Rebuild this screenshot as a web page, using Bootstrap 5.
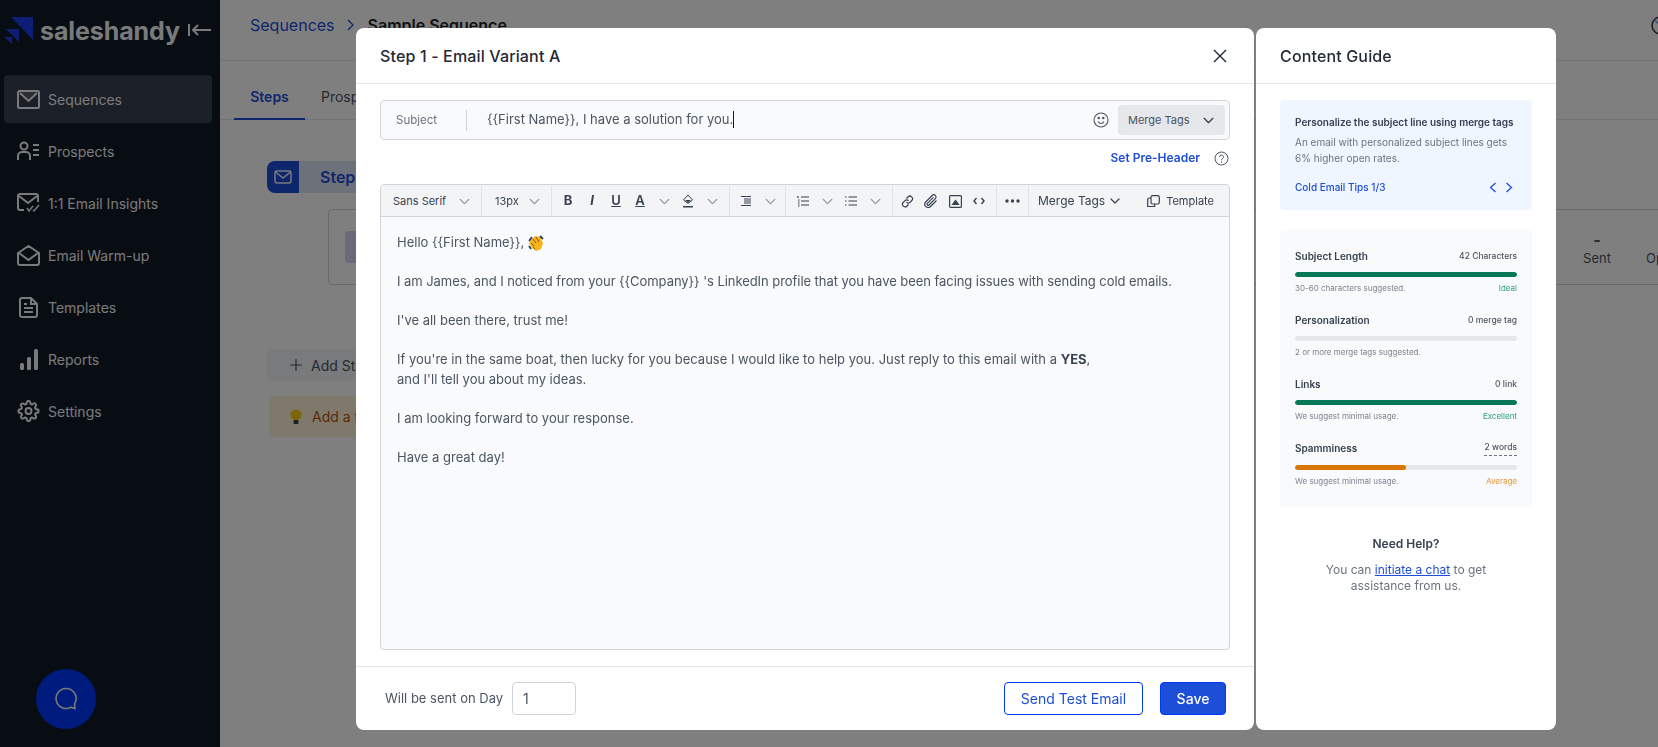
<!DOCTYPE html>
<html lang="en">
<head>
    <meta charset="UTF-8">
    <meta name="viewport" content="width=device-width, initial-scale=1.0">
    <title>Sample Sequence</title>
    <link href="https://cdn.jsdelivr.net/npm/bootstrap@5.3.0/dist/css/bootstrap.min.css" rel="stylesheet">
    <style>
        body { font-family: Inter, "Liberation Sans", sans-serif; font-size: 13px; color: #4b5563; overflow: hidden; height: 747px; background: #fff; }
        svg { flex: none; display: block; }

        /* sidebar */
        .side-bar { width: 220px; flex: none; height: 747px; background: #111827; color: #f3f4f6; padding: 0 8px 0 4px; position: relative; }
        .logo-row { height: 60px; margin-bottom: 15px; }
        .logo-text { font-size: 25px; font-weight: 700; line-height: 1; color: #f3f4f6; margin-top: 2px; letter-spacing: -.1px; }
        .side-link { height: 48px; margin-bottom: 4px; padding-left: 13px; gap: 8px; font-size: 14px; border-radius: 4px; color: #f3f4f6; }
        .side-link.is-active { background: #373e4e; }
        .chat-bubble { position: absolute; left: 36px; top: 669px; width: 60px; height: 60px; border-radius: 50%; background: #0137fc; }

        /* page behind the dialog */
        .page-main { min-width: 0; }
        .top-strip { height: 61px; border-bottom: 1px solid #e5e7eb; padding: 0 0 10px 30px; font-size: 16px; }
        .top-chev { margin: 0 12px 0 9px; }
        .top-help { margin: 0 -12px 0 auto; }
        .crumb { color: #1d4ed8; }
        .tab-strip { height: 59px; border-bottom: 1px solid #e5e7eb; padding-left: 14px; font-size: 14px; }
        .tab-item { height: 59px; padding: 0 16px; line-height: 71px; color: #4b5563; }
        .tab-item.is-active { color: #1d4ed8; font-weight: 600; border-bottom: 2px solid #1d4ed8; width: 71px; }
        .step-area { padding: 41px 0 0 47px; position: relative; }
        .step-head { width: 320px; height: 32px; background: #dbe3f5; border-radius: 8px 0 0 8px; font-size: 16px; font-weight: 600; color: #1d4ed8; }
        .step-ico { width: 32px; height: 32px; background: #1d4ed8; border-radius: 8px 0 0 8px; margin-right: 21px; }
        .step-card { margin: 16px 0 0 61px; width: 1400px; height: 76px; border: 1px solid #d1d5db; border-radius: 4px; padding: 21px 16px; }
        .step-purple { width: 60px; height: 32px; background: #d6d1f5; border-radius: 4px; }
        .stat-cell { width: 50px; text-align: center; font-size: 13px; color: #4b5563; line-height: 18px; margin-right: 24px; }
        .stat-open { width: 65px; margin-right: 0; text-align: left; }
        .stat-dash { font-weight: 700; font-size: 16px; }
        .add-step { width: 200px; height: 32px; margin-top: 64px; background: #f3f4f6; border-radius: 4px; padding-left: 23px; gap: 9px; font-size: 14px; color: #4b5563; }
        .add-tip { width: 200px; height: 41px; margin: 15px 0 0 2px; background: #fdf3d7; border-radius: 4px; padding-left: 21px; gap: 10px; font-size: 14px; color: #b45309; }

        /* dialog layer */
        .dim-layer { position: fixed; inset: 0; background: rgba(0, 0, 0, .5); padding: 28px 102px 17px 356px; gap: 2px; }
        .dlg-main { width: 898px; }
        .dlg-guide { width: 300px; }
        .dlg-main, .dlg-guide { background: #fff; border-radius: 8px; }
        .dlg-head { height: 56px; flex: none; border-bottom: 1px solid #e5e7eb; padding: 0 27px 0 24px; font-size: 16px; font-weight: 500; letter-spacing: .15px; color: #1f2937; }
        .dlg-body { padding: 16px 24px; flex: 1; min-height: 0; }
        .dlg-foot { height: 64px; flex: none; border-top: 1px solid #e5e7eb; padding: 0 28px 0 29px; }

        .subject-box { height: 40px; border: 1px solid #d1d5db; border-radius: 4px; background: #f9fafb; padding: 0 4px 0 15px; }
        .subject-label { font-size: 11.5px; color: #6b7280; width: 71px; border-right: 1px solid #d1d5db; height: 21px; line-height: 21px; }
        .subject-text { margin-left: 20px; }
        .caret-bar { display: inline-block; width: 1px; height: 17px; background: #111827; vertical-align: -4px; }
        .merge-btn { width: 107px; height: 30px; background: #e5e7eb; border-radius: 4px; font-size: 11px; padding: 0 10px; margin-left: 9px; color: #4b5563; }
        .pre-row { height: 44px; padding: 0 1px 8px 0; gap: 14px; font-size: 12px; }
        .pre-link { color: #1d4ed8; font-weight: 600; }

        .editor-box { border: 1px solid #d1d5db; border-radius: 4px; background: #f9fafb; height: 466px; }
        .tool-row { height: 32px; background: #f3f4f6; border-bottom: 1px solid #d1d5db; padding-top: 1px; border-radius: 4px 4px 0 0; font-size: 12px; color: #374151; }
        .tool-group { height: 30px; border-right: 1px solid #e0e2e6; padding: 0 5px; }
        .tool-cell { width: 24px; height: 30px; color: #374151; font-size: 13px; }
        .tool-cell.is-soft { color: #9ca3af; }
        .font-cell { padding-left: 12px; width: 101px; font-size: 11px; }
        .size-cell { padding-left: 13px; width: 70px; font-size: 11px; }
        .align-group { padding: 0 3px 0 4px; }
        .insert-group { padding-left: 2px; }
        .dots-group { width: 32px; padding: 0; }
        .merge-plain { padding-left: 9px; }
        .template-cell { font-size: 11px; padding-right: 15px; gap: 6px; }
        .editor-text { padding: 16px; line-height: 19.5px; color: #4b5563; }
        .editor-text p { margin: 0 0 19.5px; }
        .editor-text b { color: #374151; }
        .editor-text .tight-line { letter-spacing: -.055px; }

        .day-input { width: 64px; height: 33px; border: 1px solid #d1d5db; border-radius: 4px; margin-left: 9px; padding: 0 10px; font-size: 14px; color: #4b5563; }
        .day-label { font-size: 13px; color: #4b5563; }
        .test-btn { width: 139px; height: 33px; font-size: 14px; padding: 0; color: #1d4ed8; border: 1px solid #0137fc; background: #fff; border-radius: 4px; }
        .save-btn { width: 66px; height: 33px; font-size: 14px; padding: 0; font-weight: 500; color: #fff; background: #1d4ed8; border: 1px solid #0137fc; border-radius: 4px; margin-left: 17px; }

        /* content guide */
        .guide-body { padding: 16px 24px; }
        .tip-box { height: 110px; background: #eff6ff; border-radius: 4px; padding: 15px; font-size: 10px; }
        .tip-title { font-weight: 600; color: #374151; line-height: 14px; white-space: nowrap; }
        .tip-copy { color: #6b7280; line-height: 16px; margin-top: 5px; }
        .tip-foot { color: #1d4ed8; font-weight: 500; margin-top: 14px; height: 14px; padding-right: 4px; }
        .score-box { margin-top: 20px; height: 277px; background: #f9fafb; border-radius: 4px; padding: 19px 15px; }
        .score-item { height: 64.2px; }
        .score-top { height: 14px; font-size: 10px; font-weight: 600; color: #374151; }
        .score-count { font-size: 8.5px; font-weight: 500; color: #4b5563; }
        .dash-under { border-bottom: 1px dashed #6b7280; padding-bottom: 2px; }
        .score-track { height: 5px; background: #e5e7eb; border-radius: 3px; margin-top: 9px; overflow: hidden; }
        .score-fill { height: 5px; border-radius: 3px; }
        .fill-good { background: #047857; }
        .fill-warn { background: #d97706; }
        .score-note { margin-top: 6px; font-size: 8px; line-height: 11px; color: #7b8390; }
        .note-good { color: #2f9e78; }
        .note-warn { color: #e8963a; }
        .help-block { margin-top: 29px; text-align: center; font-size: 12px; line-height: 16px; color: #6b7280; padding: 0 24px; }
        .help-title { font-weight: 600; color: #374151; margin-bottom: 10px; }
        .help-block a { color: #1d4ed8; }
    </style>
</head>
<body>
    <svg width="0" height="0" class="position-absolute">
        <symbol id="i-chev" viewBox="0 0 12 12"><path d="M2 4l4 4 4-4" fill="none" stroke="currentColor" stroke-width="1.2" stroke-linecap="round" stroke-linejoin="round"/></symbol>
    </svg>

    <div class="d-flex">
        <!-- sidebar -->
        <aside class="side-bar">
            <div class="logo-row d-flex align-items-center">
                <svg width="36" height="27" viewBox="0 0 36 27" fill="#1a3ce8"><path d="M7 0h22v23z"/><path d="M2 12h13v13z"/><path d="M0 20h8v7z"/></svg>
                <span class="logo-text">saleshandy</span>
                <svg class="ms-2" width="24" height="14" viewBox="0 0 24 14" fill="none" stroke="#f3f4f6" stroke-width="2"><path d="M1 1v12M23 7H5M10 2L5 7l5 5"/></svg>
            </div>
            <a class="side-link is-active d-flex align-items-center text-decoration-none" href="#">
                <svg width="23" height="19" viewBox="0 0 23 19"><rect x="1" y="1" width="21" height="17" rx="1.5" fill="none" stroke="#f3f4f6" stroke-width="2"/><path d="M1 2h21l-10.5 9z" fill="#f3f4f6" fill-opacity=".15"/><path d="M3 3l8.5 8L20 3" fill="none" stroke="#f3f4f6" stroke-width="2"/></svg>
                Sequences
            </a>
            <a class="side-link d-flex align-items-center text-decoration-none" href="#">
                <svg width="23" height="20" viewBox="0 0 23 20" fill="none" stroke="#f3f4f6" stroke-width="2"><circle cx="7" cy="5" r="3.5"/><path d="M1 19v-4a4 4 0 0 1 4-4h4a4 4 0 0 1 4 4v4"/><path d="M16 4h6M16 9h6M16 14h6"/></svg>
                Prospects
            </a>
            <a class="side-link d-flex align-items-center text-decoration-none" href="#">
                <svg width="23" height="20" viewBox="0 0 23 20" fill="none" stroke="#f3f4f6" stroke-width="2"><path d="M7 17H3a2 2 0 0 1-2-2V3a2 2 0 0 1 2-2h16a2 2 0 0 1 2 2v6"/><path d="M2 3l9 7 9-7"/><path d="M10 15l2 3 4-5M16 17l1 1 5-6" stroke-width="1.5"/></svg>
                1:1 Email Insights
            </a>
            <a class="side-link d-flex align-items-center text-decoration-none" href="#">
                <svg width="23" height="22" viewBox="0 0 23 22" fill="none" stroke="#f3f4f6" stroke-width="2"><path d="M1 9l10.5-7L22 9v10a2 2 0 0 1-2 2H3a2 2 0 0 1-2-2z"/><path d="M2 9l9.5 7L21 9"/></svg>
                Email Warm-up
            </a>
            <a class="side-link d-flex align-items-center text-decoration-none" href="#">
                <svg width="23" height="21" viewBox="0 0 23 21" fill="none" stroke="#f3f4f6" stroke-width="2"><path d="M14 1H5a2 2 0 0 0-2 2v15a2 2 0 0 0 2 2h13a2 2 0 0 0 2-2V7z"/><path d="M14 1v6h6M7 11h9M7 15h9M7 7h3"/></svg>
                Templates
            </a>
            <a class="side-link d-flex align-items-center text-decoration-none" href="#">
                <svg width="23" height="21" viewBox="0 0 23 21" fill="#f3f4f6"><rect x="3" y="14" width="4" height="7" rx="1.5"/><rect x="10" y="8" width="4" height="13" rx="1.5"/><rect x="17" y="0" width="4" height="21" rx="1.5"/></svg>
                Reports
            </a>
            <a class="side-link d-flex align-items-center text-decoration-none" href="#">
                <svg width="23" height="22" viewBox="0 0 24 24" fill="none" stroke="#f3f4f6" stroke-width="2.2"><circle cx="12" cy="12" r="3.2"/><path d="M19.4 15a1.65 1.65 0 0 0 .33 1.82l.06.06a2 2 0 0 1 0 2.83 2 2 0 0 1-2.83 0l-.06-.06a1.65 1.65 0 0 0-1.82-.33 1.65 1.65 0 0 0-1 1.51V21a2 2 0 0 1-2 2 2 2 0 0 1-2-2v-.09A1.65 1.65 0 0 0 9 19.4a1.65 1.65 0 0 0-1.82.33l-.06.06a2 2 0 0 1-2.83 0 2 2 0 0 1 0-2.83l.06-.06a1.65 1.65 0 0 0 .33-1.82 1.65 1.65 0 0 0-1.51-1H3a2 2 0 0 1-2-2 2 2 0 0 1 2-2h.09A1.65 1.65 0 0 0 4.6 9a1.65 1.65 0 0 0-.33-1.82l-.06-.06a2 2 0 0 1 0-2.83 2 2 0 0 1 2.83 0l.06.06a1.65 1.65 0 0 0 1.82.33H9a1.65 1.65 0 0 0 1-1.51V3a2 2 0 0 1 2-2 2 2 0 0 1 2 2v.09a1.65 1.65 0 0 0 1 1.51 1.65 1.65 0 0 0 1.82-.33l.06-.06a2 2 0 0 1 2.83 0 2 2 0 0 1 0 2.83l-.06.06a1.65 1.65 0 0 0-.33 1.82V9a1.65 1.65 0 0 0 1.51 1H21a2 2 0 0 1 2 2 2 2 0 0 1-2 2h-.09a1.65 1.65 0 0 0-1.51 1z"/></svg>
                Settings
            </a>
            <div class="chat-bubble d-flex align-items-center justify-content-center">
                <svg width="24" height="24" viewBox="0 0 24 24" fill="none" stroke="#f3f4f6" stroke-width="1.6"><path d="M12 1.5a10 10 0 1 0 5 18.7l4 1.3-.5-4.5A10 10 0 0 0 12 1.5z"/></svg>
            </div>
        </aside>

        <!-- page behind the dialog -->
        <main class="page-main flex-grow-1">
            <div class="top-strip d-flex align-items-center">
                <span class="crumb">Sequences</span>
                <svg class="top-chev" width="12" height="12" viewBox="0 0 12 12" fill="none" stroke="#1d4ed8" stroke-width="1.3"><path d="M4 1l5 5-5 5"/></svg>
                <span class="fw-semibold text-dark">Sample Sequence</span>
                <svg class="top-help" width="19" height="19" viewBox="0 0 19 19" fill="none" stroke="#374151" stroke-width="1.6"><circle cx="9.5" cy="9.5" r="8.5"/><path d="M3.5 4l12 11" stroke="#60a5fa"/></svg>
            </div>
            <div class="tab-strip d-flex">
                <div class="tab-item is-active px-0 text-center">Steps</div>
                <div class="tab-item">Prospects</div>
            </div>
            <div class="step-area">
                <div class="step-head d-flex align-items-center"><span class="step-ico d-flex align-items-center justify-content-center"><svg width="18" height="14" viewBox="0 0 18 14" fill="none" stroke="#f3f4f6" stroke-width="1.5"><rect x="1" y="1" width="16" height="12" rx="2"/><path d="M1.5 2L9 8l7.5-6"/></svg></span>Step 1</div>
                <div class="step-card d-flex justify-content-between">
                    <div class="step-purple"></div>
                    <div class="d-flex">
                        <div class="stat-cell"><div class="stat-dash">-</div>Sent</div>
                        <div class="stat-cell stat-open">&nbsp;<br>Opened</div>
                    </div>
                </div>
                <div class="add-step d-flex align-items-center"><svg width="12" height="12" viewBox="0 0 12 12" stroke="#4b5563" stroke-width="1.2"><path d="M6 0v12M0 6h12"/></svg> Add Step</div>
                <div class="add-tip d-flex align-items-center"><svg width="12" height="16" viewBox="0 0 12 16"><circle cx="6" cy="6" r="5.5" fill="#facc15"/><rect x="3.5" y="11" width="5" height="4" rx="1" fill="#374151"/></svg> Add a tip</div>
            </div>
        </main>
    </div>

    <!-- dialog layer -->
    <div class="dim-layer d-flex">
        <section class="dlg-main d-flex flex-column">
            <div class="dlg-head d-flex align-items-center justify-content-between">
                <span>Step 1 - Email Variant A</span>
                <svg width="14" height="14" viewBox="0 0 14 14" fill="none" stroke="#1f2937" stroke-width="1.4"><path d="M1 1l12 12M13 1L1 13"/></svg>
            </div>
            <div class="dlg-body">
                <div class="subject-box d-flex align-items-center">
                    <span class="subject-label">Subject</span>
                    <span class="subject-text flex-grow-1">{{First Name}}, I have a solution for you.<span class="caret-bar"></span></span>
                    <svg width="16" height="16" viewBox="0 0 16 16" fill="none" stroke="#4b5563" stroke-width="1.1"><circle cx="8" cy="8" r="7"/><path d="M5 9.5c.8 1.3 1.8 2 3 2s2.2-.7 3-2"/><circle cx="5.7" cy="6" r=".7" fill="#4b5563"/><circle cx="10.3" cy="6" r=".7" fill="#4b5563"/></svg>
                    <div class="merge-btn d-flex align-items-center justify-content-between">Merge Tags <svg width="13" height="13" color="#374151"><use href="#i-chev"/></svg></div>
                </div>
                <div class="pre-row d-flex align-items-center justify-content-end">
                    <a class="pre-link text-decoration-none" href="#">Set Pre-Header</a>
                    <svg width="15" height="15" viewBox="0 0 15 15" fill="none" stroke="#4b5563" stroke-width="1"><circle cx="7.5" cy="7.5" r="6.5"/><path d="M5.5 6a2 2 0 1 1 3 1.7c-.7.4-1 .8-1 1.5"/><circle cx="7.5" cy="11" r=".4"/></svg>
                </div>
                <div class="editor-box d-flex flex-column">
                    <div class="tool-row d-flex align-items-center">
                        <div class="tool-group font-cell d-flex align-items-center justify-content-between">Sans Serif <span class="tool-cell is-soft d-flex align-items-center justify-content-center"><svg width="13" height="13"><use href="#i-chev"/></svg></span></div>
                        <div class="tool-group size-cell d-flex align-items-center justify-content-between">13px <span class="tool-cell is-soft d-flex align-items-center justify-content-center"><svg width="13" height="13"><use href="#i-chev"/></svg></span></div>
                        <div class="tool-group d-flex align-items-center ps-1">
                            <span class="tool-cell d-flex align-items-center justify-content-center fw-bold">B</span>
                            <span class="tool-cell d-flex align-items-center justify-content-center fw-bold fst-italic">I</span>
                            <span class="tool-cell d-flex align-items-center justify-content-center fw-semibold text-decoration-underline">U</span>
                            <span class="tool-cell d-flex align-items-center justify-content-center fw-semibold text-decoration-underline">A</span>
                            <span class="tool-cell is-soft d-flex align-items-center justify-content-center"><svg width="13" height="13"><use href="#i-chev"/></svg></span>
                            <span class="tool-cell d-flex align-items-center justify-content-center"><svg width="12" height="14" viewBox="0 0 12 14"><path d="M6 1L1.5 6 6 9.5 10.5 6z" fill="none" stroke="#374151"/><path d="M3 6h6L6 9z" fill="#374151"/><rect x="1" y="12" width="10" height="1.5" fill="#374151"/></svg></span>
                            <span class="tool-cell is-soft d-flex align-items-center justify-content-center"><svg width="13" height="13"><use href="#i-chev"/></svg></span>
                        </div>
                        <div class="tool-group align-group d-flex align-items-center">
                            <span class="tool-cell d-flex align-items-center justify-content-center"><svg width="12" height="12" viewBox="0 0 12 12" stroke="#374151" stroke-width="1.2"><path d="M1 1.5h10M4 4h7M4 6h7M4 8h7M1 10.5h10"/></svg></span>
                            <span class="tool-cell is-soft d-flex align-items-center justify-content-center"><svg width="13" height="13"><use href="#i-chev"/></svg></span>
                        </div>
                        <div class="tool-group d-flex align-items-center">
                            <span class="tool-cell d-flex align-items-center justify-content-center"><svg width="12" height="12" viewBox="0 0 12 12" stroke="#374151" stroke-width="1.2"><path d="M4 2h8M4 6h8M4 10h8M1 1v2M1 5h1.5M1 7h1.5M1 9h1.5M1 11h1.5"/></svg></span>
                            <span class="tool-cell is-soft d-flex align-items-center justify-content-center"><svg width="13" height="13"><use href="#i-chev"/></svg></span>
                            <span class="tool-cell d-flex align-items-center justify-content-center"><svg width="12" height="12" viewBox="0 0 12 12" stroke="#374151" stroke-width="1.2"><path d="M3.5 2H12M3.5 6H12M3.5 10H12M0 2h1.5M0 6h1.5M0 10h1.5"/></svg></span>
                            <span class="tool-cell is-soft d-flex align-items-center justify-content-center"><svg width="13" height="13"><use href="#i-chev"/></svg></span>
                        </div>
                        <div class="tool-group insert-group d-flex align-items-center">
                            <span class="tool-cell d-flex align-items-center justify-content-center"><svg width="13" height="13" viewBox="0 0 13 13" fill="none" stroke="#374151" stroke-width="1.2"><path d="M5.5 3.5L7 2a2.5 2.5 0 0 1 3.8 3.5L9 7.3a2.5 2.5 0 0 1-3.5 0"/><path d="M7.5 9.5L6 11a2.5 2.5 0 0 1-3.8-3.5L4 5.7a2.5 2.5 0 0 1 3.5 0"/></svg></span>
                            <span class="tool-cell d-flex align-items-center justify-content-center"><svg width="14" height="14" viewBox="0 0 14 14" fill="none" stroke="#374151" stroke-width="1.1"><path d="M12.5 6.5l-6 6a3.2 3.2 0 0 1-4.8-4.5l6.5-6.5a2.2 2.2 0 0 1 3.2 3.1L5 11a1.1 1.1 0 0 1-1.6-1.6l6-6"/></svg></span>
                            <span class="tool-cell d-flex align-items-center justify-content-center"><svg width="13" height="13" viewBox="0 0 13 13" fill="none" stroke="#374151" stroke-width="1.2"><rect x=".6" y=".6" width="11.8" height="11.8" rx="1"/><path d="M3.5 9.5l3-4 3 4z" fill="#374151"/></svg></span>
                            <span class="tool-cell d-flex align-items-center justify-content-center"><svg width="12" height="10" viewBox="0 0 12 10" fill="none" stroke="#374151" stroke-width="1.4"><path d="M3.5 2L1 5l2.5 3M8.5 2L11 5 8.5 8"/></svg></span>
                        </div>
                        <div class="tool-group dots-group d-flex align-items-center justify-content-center">
                            <svg width="15" height="4" viewBox="0 0 15 4" fill="#374151"><circle cx="2" cy="2" r="1.7"/><circle cx="7.5" cy="2" r="1.7"/><circle cx="13" cy="2" r="1.7"/></svg>
                        </div>
                        <div class="merge-plain d-flex align-items-center gap-1">Merge Tags <svg width="12" height="12"><use href="#i-chev"/></svg></div>
                        <div class="template-cell ms-auto d-flex align-items-center">
                            <svg width="13" height="13" viewBox="0 0 13 13" fill="none" stroke="#374151" stroke-width="1.2"><rect x="4" y=".7" width="8.3" height="8.3" rx="1.5"/><path d="M4 3H2.2A1.5 1.5 0 0 0 .7 4.5v7h7V9"/></svg>
                            Template
                        </div>
                    </div>
                    <div class="editor-text">
                        <p class="d-flex align-items-center gap-1">Hello {{First Name}},
                            <svg width="16" height="16" viewBox="0 0 16 16"><path d="M3 5l4-4 5 1 3 6-2 6-5 2-4-3-3-5z" fill="#f5b21b"/><path d="M5 4l3 4M8 2l3 5M3 8l3 3M5 12l2 2" stroke="#8a5a08" fill="none"/><path d="M1 6l3-4M12 1l3 3M1 11l2 3" stroke="#2c3e50" stroke-width="1.8" fill="none"/></svg>
                        </p>
                        <p class="tight-line">I am James, and I noticed from your {{Company}} 's LinkedIn profile that you have been facing issues with sending cold emails.</p>
                        <p>I've all been there, trust me!</p>
                        <p>If you're in the same boat, then lucky for you because I would like to help you. Just reply to this email with a <b>YES</b>,<br>and I'll tell you about my ideas.</p>
                        <p>I am looking forward to your response.</p>
                        <p>Have a great day!</p>
                    </div>
                </div>
            </div>
            <div class="dlg-foot d-flex align-items-center">
                <span class="day-label">Will be sent on Day</span>
                <input class="day-input" type="text" value="1">
                <button class="test-btn ms-auto" type="button">Send Test Email</button>
                <button class="save-btn" type="button">Save</button>
            </div>
        </section>

        <aside class="dlg-guide d-flex flex-column">
            <div class="dlg-head d-flex align-items-center">Content Guide</div>
            <div class="guide-body">
                <div class="tip-box">
                    <div class="tip-title">Personalize the subject line using merge tags</div>
                    <div class="tip-copy">An email with personalized subject lines gets 6% higher open rates.</div>
                    <div class="tip-foot d-flex align-items-center justify-content-between">
                        <span>Cold Email Tips 1/3</span>
                        <span class="d-flex gap-2">
                            <svg width="8" height="11" viewBox="0 0 8 11" fill="none" stroke="#1d4ed8" stroke-width="1.3"><path d="M6.5 1l-5 4.500 5 4.500"/></svg>
                            <svg width="8" height="11" viewBox="0 0 8 11" fill="none" stroke="#1d4ed8" stroke-width="1.3"><path d="M1.5 1l5 4.500-5 4.500"/></svg>
                        </span>
                    </div>
                </div>
                <div class="score-box">
                    <div class="score-item">
                        <div class="score-top d-flex justify-content-between align-items-center"><span>Subject Length</span><span class="score-count">42 Characters</span></div>
                        <div class="score-track"><div class="score-fill fill-good" style="width:100%"></div></div>
                        <div class="score-note d-flex justify-content-between"><span>30-60 characters suggested.</span><span class="note-good">Ideal</span></div>
                    </div>
                    <div class="score-item">
                        <div class="score-top d-flex justify-content-between align-items-center"><span>Personalization</span><span class="score-count">0 merge tag</span></div>
                        <div class="score-track"></div>
                        <div class="score-note">2 or more merge tags suggested.</div>
                    </div>
                    <div class="score-item">
                        <div class="score-top d-flex justify-content-between align-items-center"><span>Links</span><span class="score-count">0 link</span></div>
                        <div class="score-track"><div class="score-fill fill-good" style="width:100%"></div></div>
                        <div class="score-note d-flex justify-content-between"><span>We suggest minimal usage.</span><span class="note-good">Excellent</span></div>
                    </div>
                    <div class="score-item">
                        <div class="score-top d-flex justify-content-between align-items-center"><span>Spamminess</span><span class="score-count dash-under">2 words</span></div>
                        <div class="score-track"><div class="score-fill fill-warn" style="width:50%"></div></div>
                        <div class="score-note d-flex justify-content-between"><span>We suggest minimal usage.</span><span class="note-warn">Average</span></div>
                    </div>
                </div>
                <div class="help-block">
                    <div class="help-title">Need Help?</div>
                    You can <a href="#">initiate a chat</a> to get assistance from us.
                </div>
            </div>
        </aside>
    </div>

    <script src="https://cdn.jsdelivr.net/npm/bootstrap@5.3.0/dist/js/bootstrap.bundle.min.js"></script>
</body>
</html>
